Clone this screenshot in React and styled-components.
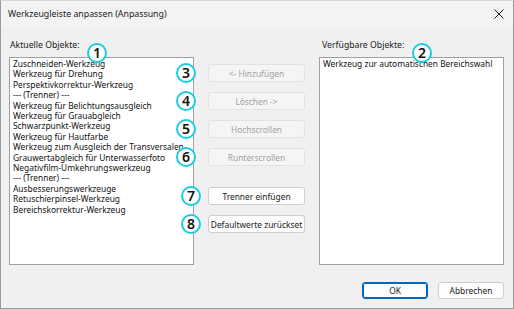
import styled, { createGlobalStyle } from 'styled-components'

const current = [
  'Zuschneiden-Werkzeug',
  'Werkzeug für Drehung',
  'Perspektivkorrektur-Werkzeug',
  '--- (Trenner) ---',
  'Werkzeug für Belichtungsausgleich',
  'Werkzeug für Grauabgleich',
  'Schwarzpunkt-Werkzeug',
  'Werkzeug für Hautfarbe',
  'Werkzeug zum Ausgleich der Transversalen',
  'Grauwertabgleich für Unterwasserfoto',
  'Negativfilm-Umkehrungswerkzeug',
  '--- (Trenner) ---',
  'Ausbesserungswerkzeuge',
  'Retuschierpinsel-Werkzeug',
  'Bereichskorrektur-Werkzeug'
]

const actions = [
  { label: '<- Hinzufügen', n: 3, disabled: true },
  { label: 'Löschen ->', n: 4, disabled: true },
  { label: 'Hochscrollen', n: 5, disabled: true },
  { label: 'Runterscrollen', n: 6, disabled: true },
  { label: 'Trenner einfügen', n: 7, gap: true },
  { label: 'Defaultwerte zurückset', n: 8 }
]

const App = () => {
  return (
    <>
      <GlobalStyle />
      <Dialog>
        <TitleBar>
          <Title>Werkzeugleiste anpassen (Anpassung)</Title>
          <Close>
            <svg width='10' height='10' viewBox='0 0 10 10'>
              <path d='M0.5 0.5 L9.5 9.5 M9.5 0.5 L0.5 9.5' stroke='#1a1a1a' strokeWidth='1' />
            </svg>
          </Close>
        </TitleBar>
        <Body>
          <Column>
            <Label>Aktuelle Objekte:</Label>
            <List>
              {current.map((item, i) => (
                <Item key={i}>{item}</Item>
              ))}
            </List>
            <Badge $left={78} $top={4}>1</Badge>
          </Column>
          <Actions>
            {actions.map(a => (
              <ActionRow key={a.n} $gap={a.gap}>
                <Badge $left={a.n > 6 ? -27 : -32} $top={-1}>{a.n}</Badge>
                <Button $disabled={a.disabled}>{a.label}</Button>
              </ActionRow>
            ))}
          </Actions>
          <Column>
            <Label $indent={3}>Verfügbare Objekte:</Label>
            <List>
              <Item>Werkzeug zur automatischen Bereichswahl</Item>
            </List>
            <Badge $left={93} $top={4}>2</Badge>
          </Column>
        </Body>
        <Footer>
          <Button $primary $wide>OK</Button>
          <Button $wide>Abbrechen</Button>
        </Footer>
      </Dialog>
    </>
  )
}

// Styles
const GlobalStyle = createGlobalStyle`
  body {
    margin: 0;
    background: #f0f0f0;
    font-family: "Noto Sans", "Liberation Sans", sans-serif;
  }
`

const Dialog = styled.div`
  width: 514px;
  height: 309px;
  box-sizing: border-box;
  border: 1px solid #9a9a9a;
  border-top-color: #d8d8d8;
  background: #f0f0f0;
  display: flex;
  flex-direction: column;
`

const TitleBar = styled.div`
  height: 26px;
  display: flex;
  align-items: center;
  justify-content: space-between;
  padding: 0 8px 0 7px;
  background: #f3f3f3;
`

const Title = styled.div`
  font-size: 8.8px;
  color: #1a1a1a;
`

const Close = styled.div`
  display: flex;
  align-items: center;
  padding-right: 1px;
`

const Body = styled.div`
  display: grid;
  grid-template-columns: 185px 97px 185px;
  column-gap: 14px;
  padding: 12px 9px 0 8px;
`

const Column = styled.div`
  position: relative;
  display: flex;
  flex-direction: column;
`

const Label = styled.div`
  font-size: 8.7px;
  color: #1a1a1a;
  height: 18px;
  padding-left: ${p => (p.$indent || 1)}px;
  line-height: 13px;
`

const List = styled.div`
  height: 208px;
  box-sizing: border-box;
  border: 1px solid #a0a0a0;
  background: #fff;
  padding: 1px 3px;
`

const Item = styled.div`
  font-size: 8.4px;
  line-height: 10.4px;
  color: #111;
  white-space: nowrap;
  overflow: hidden;
`

const Actions = styled.div`
  display: flex;
  flex-direction: column;
  gap: 10px;
  padding-top: 25px;
`

const ActionRow = styled.div`
  position: relative;
  margin-top: ${p => (p.$gap ? '11px' : '0')};
`

const Button = styled.div`
  height: ${p => (p.$wide ? '17px' : '18px')};
  width: ${p => (p.$wide ? '66px' : 'auto')};
  box-sizing: border-box;
  display: flex;
  align-items: center;
  justify-content: center;
  font-size: 8.4px;
  white-space: nowrap;
  overflow: hidden;
  border-radius: 3px;
  color: ${p => (p.$disabled ? '#a2a2a2' : '#1a1a1a')};
  background: ${p => (p.$disabled ? '#f5f5f5' : '#fdfdfd')};
  border: 1px solid ${p => (p.$primary ? '#0067c0' : p.$disabled ? '#e3e3e3' : '#cfcfcf')};
  box-shadow: ${p => (p.$primary ? 'inset 0 0 0 1px #0067c0' : 'none')};
`

const Footer = styled.div`
  display: flex;
  justify-content: flex-end;
  gap: 10px;
  padding: 17px 9px 0 0;
`

const Badge = styled.div`
  position: absolute;
  left: ${p => p.$left}px;
  top: ${p => p.$top}px;
  width: 20px;
  height: 20px;
  box-sizing: border-box;
  border: 2.5px solid #1ccbe3;
  border-radius: 50%;
  background: #fff;
  display: flex;
  align-items: center;
  justify-content: center;
  font-family: "Noto Sans", sans-serif;
  font-size: 14px;
  font-weight: 600;
  color: #111;
  line-height: 1;
  z-index: 2;
`

export default App
